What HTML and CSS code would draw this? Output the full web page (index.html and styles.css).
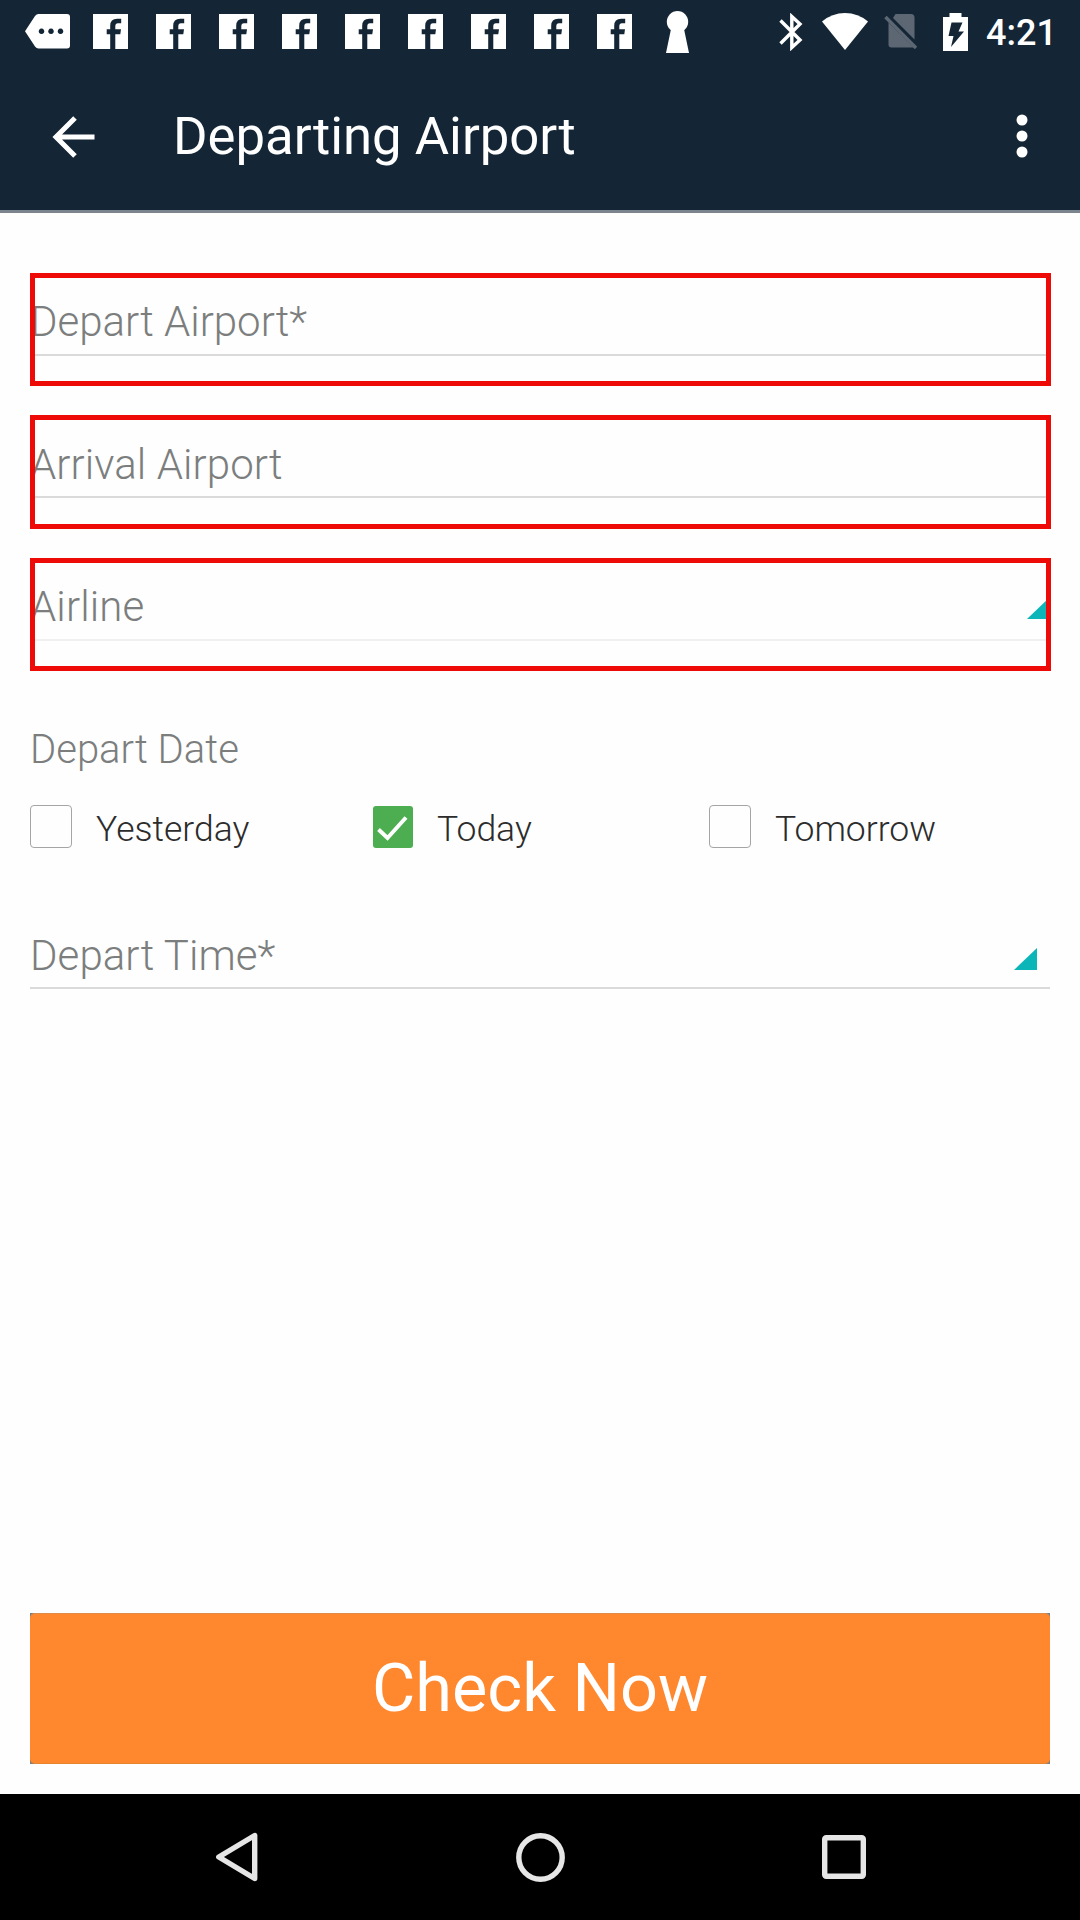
FILE: index.html
```html
<!DOCTYPE html>
<html lang="en">
<head>
<meta charset="utf-8">
<title>Departing Airport</title>
<link rel="stylesheet" href="styles.css">
</head>
<body>
<svg class="defs" aria-hidden="true">
  <symbol id="fb" viewBox="0 0 35 35">
    <path d="M0 0H35V35H22.3V20.3H27.3L28 15.3H22.3V12.2Q22.3 9.3 25 9.3H28.2V4.7H24.2Q17.2 4.7 17.2 11.7V15.3H13.7V20.3H17.2V35H0Z"/>
  </symbol>
</svg>
<div class="screen">
  <header class="header">
    <div class="status">
      <div class="notifications">
        <svg class="message" viewBox="0 0 45 35"><path fill-rule="evenodd" d="M13.500 0H42Q45 0 45 3V31.500Q45 34.500 42 34.500H13.500Q11.500 34.500 10 32.500L0 17.300L10 2Q11.500 0 13.500 0ZM16.500 14.500a2.800 2.800 0 1 0 .01 0ZM26 14.500a2.800 2.800 0 1 0 .01 0ZM35.500 14.500a2.800 2.800 0 1 0 .01 0Z"/></svg>
        <svg class="fb"><use href="#fb"/></svg>
        <svg class="fb"><use href="#fb"/></svg>
        <svg class="fb"><use href="#fb"/></svg>
        <svg class="fb"><use href="#fb"/></svg>
        <svg class="fb"><use href="#fb"/></svg>
        <svg class="fb"><use href="#fb"/></svg>
        <svg class="fb"><use href="#fb"/></svg>
        <svg class="fb"><use href="#fb"/></svg>
        <svg class="fb"><use href="#fb"/></svg>
        <svg class="keyhole" viewBox="0 0 23 42"><circle cx="11.500" cy="10.700" r="10.700"/><path d="M5 18H18L23 42H0Z"/></svg>
      </div>
      <div class="system">
        <svg class="bluetooth" viewBox="0 0 24 38"><path d="M1.500 7.500L21 27L12.800 34.500V3.500L21 11L1.500 30.500"/></svg>
        <svg class="wifi" viewBox="0 0 46 37"><path d="M0 8.500Q10 0 23 0T46 8.500L23 37Z"/></svg>
        <svg class="sim" viewBox="0 0 34 37"><path d="M11.500 1H27Q30.500 1 30.500 4.500V26.500L9 5ZM4.500 9.500L29.500 34.500H7.500Q4.500 34.500 4.500 31.500Z"/><path class="slash" d="M1.500 4L32 35"/></svg>
        <svg class="battery" viewBox="0 0 25 38"><path fill-rule="evenodd" d="M6.500 0H18.500V4H25V38H0V4H6.500ZM8.500 9.500H19.500L15.500 18.500H21L8 34L10.500 23H5.500Z"/></svg>
        <span class="clock">4:21</span>
      </div>
    </div>
    <div class="toolbar">
      <svg class="back" viewBox="0 0 43 42"><path d="M42.500 21H4M23 2L4 21L23 40"/></svg>
      <h1 class="title">Departing Airport</h1>
      <svg class="more" viewBox="0 0 12 44"><circle cx="6" cy="6" r="5.500"/><circle cx="6" cy="22" r="5.500"/><circle cx="6" cy="38" r="5.500"/></svg>
    </div>
  </header>

  <main class="form">
    <div class="fields">
      <div class="field marked"><span class="label">Depart Airport*</span></div>
      <div class="field marked tall"><span class="label">Arrival Airport</span></div>
      <div class="field marked faint"><span class="label">Airline</span><svg class="corner" viewBox="0 0 23 22"><path d="M0 22L23 0V22Z"/></svg></div>
    </div>

    <h2 class="date-title">Depart Date</h2>
    <div class="days">
      <div class="day"><span class="box"></span><span class="day-name">Yesterday</span></div>
      <div class="day"><svg class="checked" viewBox="0 0 40 42"><rect width="40" height="42" rx="3"/><path d="M5.500 23.500L14.500 32L33 11.500"/></svg><span class="day-name">Today</span></div>
      <div class="day"><span class="box"></span><span class="day-name">Tomorrow</span></div>
    </div>

    <div class="field time"><span class="label">Depart Time*</span><svg class="corner" viewBox="0 0 23 22"><path d="M0 22L23 0V22Z"/></svg></div>

    <div class="submit"><button class="check">Check Now</button></div>
  </main>

  <nav class="nav">
    <svg class="nav-back" viewBox="0 0 42 50"><path d="M2.800 25L38.700 3.500V46.500Z"/></svg>
    <svg class="nav-home" viewBox="0 0 50 50"><circle cx="25.500" cy="25.500" r="21.700"/></svg>
    <svg class="nav-recent" viewBox="0 0 44 44"><rect x="2.700" y="2.700" width="38.600" height="38.600" rx="1.500"/></svg>
  </nav>
</div>
</body>
</html>
```
FILE: styles.css
```css
* { box-sizing: border-box; }
body { margin: 0; background: #fff; font-family: Roboto, "Liberation Sans", sans-serif; }
svg { display: block; flex: none; }
h1, h2 { margin: 0; font-weight: 400; }
.defs { width: 0; height: 0; position: absolute; }

.screen { width: 1080px; height: 1920px; display: flex; flex-direction: column; overflow: hidden; background: #fefefe; }

/* status bar and toolbar */
.header { height: 213px; background: #142636; border-bottom: 3px solid #7c848d; color: #fff; fill: #fff; }
.status { height: 63px; display: flex; justify-content: space-between; align-items: center; padding: 0 26px 0 25px; }
.notifications { display: flex; align-items: center; }
.message { width: 45px; height: 35px; margin-right: 23px; }
.fb { width: 35px; height: 35px; margin-right: 28px; }
.keyhole { width: 23px; height: 42px; margin-left: 6px; }
.system { display: flex; align-items: center; }
.bluetooth { width: 24px; height: 38px; margin-right: 19px; fill: none; stroke: #fff; stroke-width: 3.4px; }
.wifi { width: 46px; height: 37px; margin-right: 16px; }
.sim { width: 34px; height: 37px; margin-right: 25px; fill: #5c6773; }
.slash { stroke: #5c6773; stroke-width: 3.4px; }
.battery { width: 25px; height: 38px; margin-right: 18px; }
.clock { width: 68px; font-size: 36px; line-height: 63px; font-weight: 500; padding-top: 3px; white-space: nowrap; }
.toolbar { height: 147px; display: flex; align-items: center; padding: 0 52px; }
.back { width: 43px; height: 42px; fill: none; stroke: #fff; stroke-width: 5px; }
.title { margin-left: 78px; font-size: 52.7px; line-height: 147px; flex: 1; white-space: nowrap; }
.more { width: 12px; height: 44px; margin-bottom: 1px; }

/* form */
.form { flex: 1; display: flex; flex-direction: column; padding: 60px 29px 30px 30px; }
.fields { display: flex; flex-direction: column; gap: 29px; }
.field { position: relative; height: 113px; padding-top: 17px; color: #7c7e7e; }
.tall { height: 114px; }
.label { display: block; height: 66px; border-bottom: 2px solid #dadada; font-size: 42px; line-height: 64px; font-weight: 300; white-space: nowrap; }
.tall .label, .time .label { line-height: 66px; letter-spacing: 0.08px; }
.faint .label { border-color: #f0f0f0; letter-spacing: 0.1px; }
.marked::after { content: ""; position: absolute; inset: 0; border: 5px solid #ee0a06; }
.corner { position: absolute; right: 1px; top: 39px; width: 23px; height: 22px; fill: #0cb5b8; }

.date-title { margin-top: 49px; margin-bottom: 25px; height: 60px; font-size: 40px; line-height: 60px; font-weight: 300; color: #7c7e7e; }
.days { height: 43px; display: grid; grid-template-columns: 343px 336px 1fr; }
.day { display: flex; align-items: center; }
.box { width: 42px; height: 43px; border: 1px solid #a5a5a5; border-radius: 4px; }
.checked { width: 40px; height: 42px; fill: #4cae50; }
.checked path { fill: none; stroke: #fff; stroke-width: 4px; }
.day-name { margin-left: 24px; padding-top: 5px; font-size: 35.5px; line-height: 38px; font-weight: 300; color: #2c2c2c; }
.time { margin-top: 58px; margin-right: 1px; }
.time .corner { right: 13px; top: 42px; }

.submit { margin-top: auto; margin-right: 1px; height: 151px; background: #748087; display: flex; }
.check { flex: 1; border: 0; border-top: 1px solid #de8b48; border-bottom: 1px solid #e8832e; border-radius: 5px; background: #ff872d; color: #fff; font-family: inherit; font-size: 66.6px; line-height: 149px; font-weight: 400; padding: 0; }

/* navigation bar */
.nav { height: 126px; background: #000; display: flex; align-items: center; padding-left: 216px; fill: none; stroke: #e6e6e6; stroke-width: 5.400px; stroke-linejoin: round; }
.nav-back { width: 42px; height: 50px; }
.nav-home { width: 50px; height: 50px; margin-left: 257px; }
.nav-recent { width: 44px; height: 44px; margin-left: 257px; }
```
